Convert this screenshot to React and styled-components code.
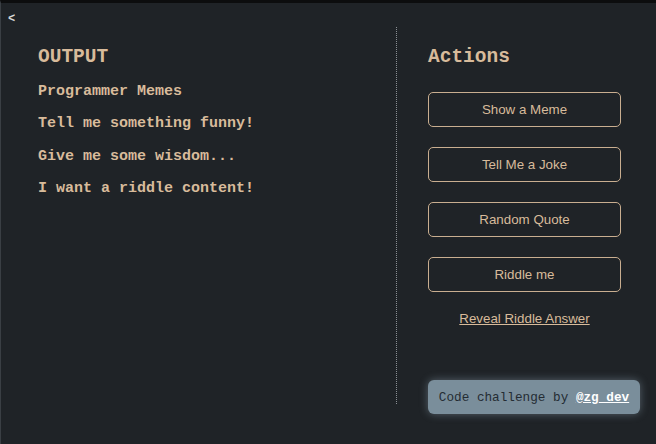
import React from 'react';
import styled, { createGlobalStyle } from 'styled-components';

const GlobalStyle = createGlobalStyle`
  html, body {
    margin: 0;
    padding: 0;
    background: #1f2327;
  }
  body {
    font-family: "Liberation Mono", "Courier New", monospace;
  }
`;

const Page = styled.div`
  position: relative;
  box-sizing: border-box;
  width: 656px;
  height: 444px;
  background: #1f2327;
  border-top: 3px solid #0c0d0e;
  border-left: 1px solid #3a3f44;
  color: #d8bb9b;
`;

const Back = styled.div`
  position: absolute;
  top: 9px;
  left: 7px;
  font-size: 12px;
  font-weight: bold;
  color: #d8d8d8;
`;

const Layout = styled.div`
  display: grid;
  grid-template-columns: 396px 1fr;
  padding-top: 24px;
`;

const OutputPanel = styled.section`
  border-right: 1px dotted #8a8f94;
  height: 377px;
  padding: 20px 0 0 37px;
  box-sizing: border-box;
`;

const ActionsPanel = styled.section`
  padding: 20px 0 0 31px;
  display: flex;
  flex-direction: column;
  width: 193px;
`;

const Heading = styled.h2`
  margin: 0;
  font-family: "Liberation Mono", "Courier New", monospace;
  font-size: 19.5px;
  line-height: 20px;
  font-weight: bold;
  color: #d8bb9b;
`;

const OutputList = styled.ul`
  list-style: none;
  margin: 16px 0 0;
  padding: 0;
`;

const OutputItem = styled.li`
  font-size: 15px;
  line-height: 17px;
  font-weight: bold;
  margin-bottom: 15.3px;
`;

const ButtonStack = styled.div`
  display: flex;
  flex-direction: column;
  gap: 20px;
  margin-top: 25px;
`;

const ActionButton = styled.button`
  height: 35px;
  width: 193px;
  background: transparent;
  border: 1px solid #c9ae90;
  border-radius: 5px;
  color: #d8bb9b;
  font-family: "Liberation Sans", Arial, sans-serif;
  font-size: 13.333px;
  cursor: pointer;
`;

const RevealLink = styled.button`
  margin-top: 19px;
  background: none;
  border: none;
  padding: 0;
  align-self: center;
  color: #d8bb9b;
  font-family: "Liberation Sans", Arial, sans-serif;
  font-size: 13.333px;
  line-height: 16px;
  text-decoration: underline;
  cursor: pointer;
`;

const Credit = styled.div`
  position: absolute;
  right: 16px;
  bottom: 30px;
  width: 212px;
  height: 34px;
  box-sizing: border-box;
  display: flex;
  align-items: center;
  justify-content: center;
  background: #7a8e9b;
  border-radius: 6px;
  box-shadow: 0 0 8px rgba(190, 215, 235, 0.35);
  color: #242c33;
  font-family: "Liberation Mono", "Courier New", monospace;
  font-size: 12.7px;
  white-space: pre;
`;

const CreditLink = styled.a`
  color: #ffffff;
  font-weight: bold;
  text-decoration: underline;
`;

const outputs = [
  'Programmer Memes',
  'Tell me something funny!',
  'Give me some wisdom...',
  'I want a riddle content!',
];

const actions = ['Show a Meme', 'Tell Me a Joke', 'Random Quote', 'Riddle me'];

export default function App() {
  return (
    <>
      <GlobalStyle />
      <Page>
        <Back>&lt;</Back>
        <Layout>
          <OutputPanel>
            <Heading>OUTPUT</Heading>
            <OutputList>
              {outputs.map((o) => (
                <OutputItem key={o}>{o}</OutputItem>
              ))}
            </OutputList>
          </OutputPanel>
          <ActionsPanel>
            <Heading>Actions</Heading>
            <ButtonStack>
              {actions.map((a) => (
                <ActionButton key={a}>{a}</ActionButton>
              ))}
            </ButtonStack>
            <RevealLink>Reveal Riddle Answer</RevealLink>
          </ActionsPanel>
        </Layout>
        <Credit>
          Code challenge by <CreditLink href="#">@zg_dev</CreditLink>
        </Credit>
      </Page>
    </>
  );
}
